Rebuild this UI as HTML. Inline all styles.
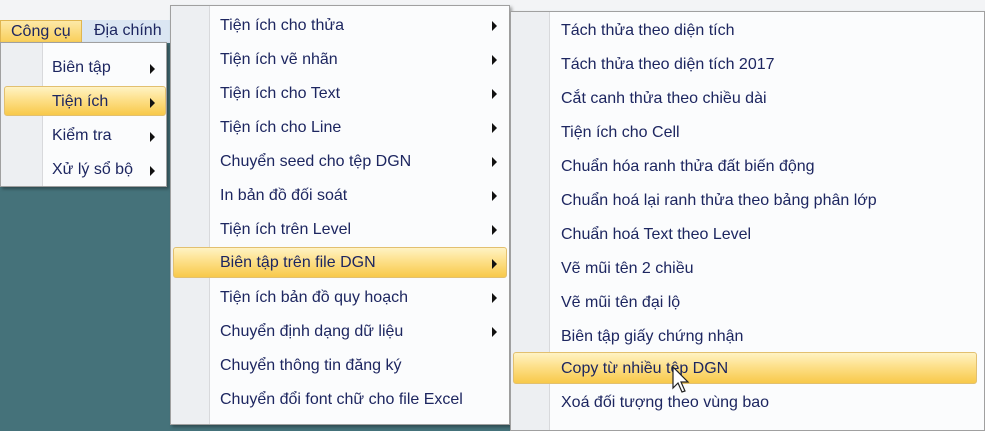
<!DOCTYPE html>
<html><head><meta charset="utf-8"><style>
*{margin:0;padding:0;box-sizing:border-box}
body{width:985px;height:418px;overflow:hidden;position:relative;background:#45727a;font-family:"Liberation Sans","DejaVu Sans",sans-serif;font-size:16px;color:#1d2660}
.top{position:absolute;left:0;top:0;width:985px;height:20px;background:#f3f4f6}
.bar{position:absolute;left:0;top:20px;width:170px;height:23px;background:#dbe6f3}
.cc{position:absolute;left:0;top:20px;width:82px;height:23px;background:linear-gradient(#fde9a8,#f9cf5a);border:1px solid #e0b650;padding:2px 0 0 10px;color:#1d2660}
.dc{position:absolute;left:94px;top:22px;color:#1d2660}
.menu{position:absolute;background:#fbfcfd;border:1px solid #a0a0a0;box-shadow:2px 2px 3px rgba(0,0,0,.35)}
.gut{position:absolute;left:0;top:0;bottom:0;background:#edeff2;border-right:1px solid #d8d9dc}
.it{position:absolute;white-space:nowrap}
.hl{position:absolute;border:1px solid #e2c070;border-radius:3px;background:linear-gradient(#fff3c4 0%,#fde08a 45%,#f8c94a 100%)}
.ar{position:absolute;width:0;height:0;border-top:5px solid transparent;border-bottom:5px solid transparent;border-left:5px solid #111}
</style></head><body>
<div class="top"></div>
<div class="bar"></div>
<div class="cc">Công cụ</div>
<div class="dc">Địa chính</div>

<div class="menu" style="left:0;top:42px;width:167px;height:145px">
<div class="gut" style="width:42px"></div>
<div class="hl" style="left:3px;top:43px;width:162px;height:30px"></div>
<div class="it" style="left:51px;top:16px">Biên tập</div>
<div class="it" style="left:51px;top:50px">Tiện ích</div>
<div class="it" style="left:51px;top:84px">Kiểm tra</div>
<div class="it" style="left:51px;top:118px">Xử lý sổ bộ</div>
<div class="ar" style="left:149px;top:21px"></div>
<div class="ar" style="left:149px;top:55px"></div>
<div class="ar" style="left:149px;top:89px"></div>
<div class="ar" style="left:149px;top:123px"></div>
</div>

<div class="menu" style="left:170px;top:5px;width:340px;height:420px">
<div class="gut" style="width:39px"></div>
<div class="hl" style="left:2px;top:241px;width:334px;height:31px"></div>
<div class="it" style="left:49px;top:11px">Tiện ích cho thửa</div>
<div class="it" style="left:49px;top:45px">Tiện ích vẽ nhãn</div>
<div class="it" style="left:49px;top:79px">Tiện ích cho Text</div>
<div class="it" style="left:49px;top:113px">Tiện ích cho Line</div>
<div class="it" style="left:49px;top:147px">Chuyển seed cho tệp DGN</div>
<div class="it" style="left:49px;top:181px">In bản đồ đối soát</div>
<div class="it" style="left:49px;top:215px">Tiện ích trên Level</div>
<div class="it" style="left:49px;top:248px">Biên tập trên file DGN</div>
<div class="it" style="left:49px;top:283px">Tiện ích bản đồ quy hoạch</div>
<div class="it" style="left:49px;top:317px">Chuyển định dạng dữ liệu</div>
<div class="it" style="left:49px;top:351px">Chuyển thông tin đăng ký</div>
<div class="it" style="left:49px;top:385px">Chuyển đổi font chữ cho file Excel</div>
<div class="ar" style="left:321px;top:15px"></div>
<div class="ar" style="left:321px;top:49px"></div>
<div class="ar" style="left:321px;top:83px"></div>
<div class="ar" style="left:321px;top:117px"></div>
<div class="ar" style="left:321px;top:151px"></div>
<div class="ar" style="left:321px;top:185px"></div>
<div class="ar" style="left:321px;top:219px"></div>
<div class="ar" style="left:321px;top:253px"></div>
<div class="ar" style="left:321px;top:287px"></div>
<div class="ar" style="left:321px;top:321px"></div>
</div>

<div class="menu" style="left:510px;top:11px;width:475px;height:420px">
<div class="gut" style="width:39px"></div>
<div class="hl" style="left:2px;top:340px;width:464px;height:32px"></div>
<div class="it" style="left:50px;top:10px">Tách thửa theo diện tích</div>
<div class="it" style="left:50px;top:44px">Tách thửa theo diện tích 2017</div>
<div class="it" style="left:50px;top:78px">Cắt canh thửa theo chiều dài</div>
<div class="it" style="left:50px;top:112px">Tiện ích cho Cell</div>
<div class="it" style="left:50px;top:146px">Chuẩn hóa ranh thửa đất biến động</div>
<div class="it" style="left:50px;top:180px">Chuẩn hoá lại ranh thửa theo bảng phân lớp</div>
<div class="it" style="left:50px;top:214px">Chuẩn hoá Text theo Level</div>
<div class="it" style="left:50px;top:248px">Vẽ mũi tên 2 chiều</div>
<div class="it" style="left:50px;top:282px">Vẽ mũi tên đại lộ</div>
<div class="it" style="left:50px;top:316px">Biên tập giấy chứng nhận</div>
<div class="it" style="left:50px;top:348px">Copy từ nhiều tệp DGN</div>
<div class="it" style="left:50px;top:382px">Xoá đối tượng theo vùng bao</div>
</div>
<svg style="position:absolute;left:672px;top:366px" width="20" height="30" viewBox="0 0 20 30"><path d="M1 1 L1 22 L6 17 L10 26 L13 25 L9 16 L16 16 Z" fill="#fff" stroke="#222" stroke-width="1.2"/></svg>
</body></html>
